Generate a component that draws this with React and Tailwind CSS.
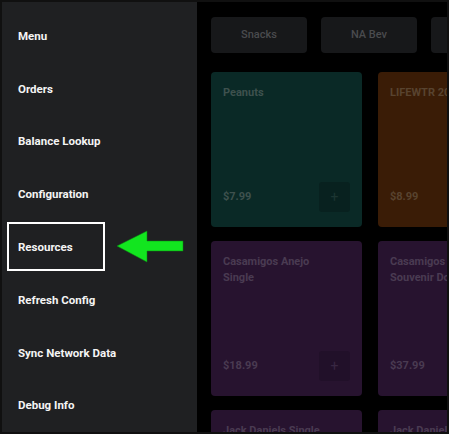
const menuItems = [
  'Menu',
  'Orders',
  'Balance Lookup',
  'Configuration',
  'Resources',
  'Refresh Config',
  'Sync Network Data',
  'Debug Info',
];

const categories = ['Snacks', 'NA Bev', 'Beer'];

const teal = { bg: 'bg-[#0a2926]', btn: 'bg-[#08211f]', text: 'text-[#3e514e]', plus: 'text-[#1c3532]' };
const orange = { bg: 'bg-[#3a1c06]', btn: 'bg-[#311705]', text: 'text-[#58432f]', plus: 'text-[#4a2a12]' };
const purple = { bg: 'bg-[#27132f]', btn: 'bg-[#211029]', text: 'text-[#4a3b52]', plus: 'text-[#382742]' };

const products = [
  { lines: ['Peanuts'], price: '$7.99', ...teal },
  { lines: ['LIFEWTR 20oz'], price: '$8.99', ...orange },
  { lines: ['Casamigos Anejo', 'Single'], price: '$18.99', ...purple },
  { lines: ['Casamigos', 'Souvenir Double'], price: '$37.99', ...purple },
  { lines: ['Jack Daniels Single'], price: '$14.99', ...purple },
  { lines: ['Jack Daniels Double'], price: '$27.99', ...purple },
];

function ProductCard({ product }) {
  return (
    <div className={`${product.bg} rounded-[4px] h-[155px] flex flex-col justify-between px-3 pt-[13px] pb-[15px]`}>
      <div className={`${product.text} text-[11px] font-bold leading-[16px] whitespace-nowrap`}>
        {product.lines.map((l) => (
          <div key={l}>{l}</div>
        ))}
      </div>
      <div className="flex items-center justify-between">
        <span className={`${product.text} text-[11px] font-bold`}>{product.price}</span>
        <div className={`${product.btn} ${product.plus} w-[31px] h-[30px] rounded-[3px] flex items-center justify-center text-[14px]`}>
          +
        </div>
      </div>
    </div>
  );
}

export default function App() {
  return (
    <div
      className="w-[449px] h-[434px] overflow-hidden border-2 border-[#101010] bg-black flex"
      style={{ fontFamily: 'Roboto, "Noto Sans", sans-serif' }}
    >
      {/* Side drawer */}
      <div className="w-[195px] shrink-0 bg-[#1f2022] pt-[8px]">
        {menuItems.map((item) => (
          <div key={item} className="relative h-[52.8px] flex items-center pl-4 text-[#f4f4f4] text-[11.5px] font-bold">
            {item}
            {item === 'Resources' && (
              <>
                <div className="absolute left-[5px] top-[1px] w-[98px] h-[49px] border-2 border-white" />
                <svg
                  className="absolute left-[114px] top-[8px]"
                  width="68"
                  height="36"
                  viewBox="0 0 68 36"
                >
                  <polygon
                    points="1,17 31,2 31,12 67,12 67,22 31,22 31,33"
                    fill="#12e51f"
                    stroke="#0a8a12"
                    strokeWidth="0.5"
                  />
                </svg>
              </>
            )}
          </div>
        ))}
      </div>

      {/* Menu content */}
      <div className="flex-1 pl-[14px] pt-[15px] overflow-hidden">
        <div className="flex gap-[14px]">
          {categories.map((c) => (
            <div
              key={c}
              className="w-[96px] h-[36px] shrink-0 bg-[#17181a] rounded-[4px] flex items-center justify-center text-[#4a4b4e] text-[11px] font-medium"
            >
              {c}
            </div>
          ))}
        </div>
        <div className="grid grid-cols-[151px_151px] gap-x-[16px] gap-y-[14px] mt-[19px]">
          {products.map((p) => (
            <ProductCard key={p.lines.join(' ')} product={p} />
          ))}
        </div>
      </div>
    </div>
  );
}
